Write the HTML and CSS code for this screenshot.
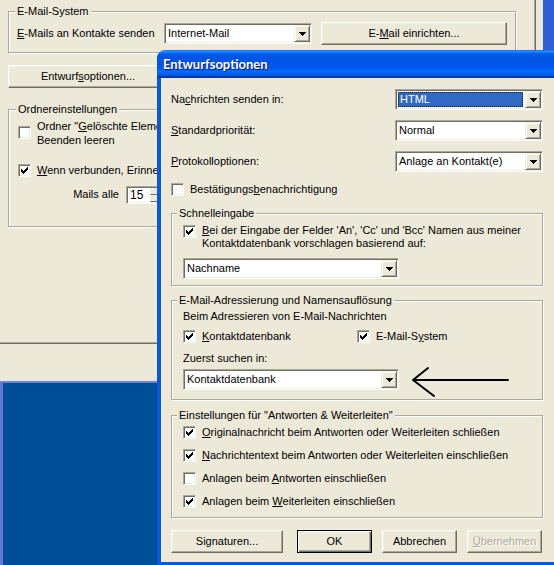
FILE: index.html
```html
<!DOCTYPE html>
<html lang="de">
<head>
    <meta charset="UTF-8">
    <title>Entwurfsoptionen</title>
    <link rel="stylesheet" href="styles.css">
</head>
<body>
<!-- window behind the dialog -->
<div class="win-back">
    <div class="page">
        <fieldset class="grp grp-mail">
            <legend>E-Mail-System</legend>
            <div class="mail-row">
                <span class="lbl-mail"><u>E</u>-Mails an Kontakte senden</span>
                <div class="combo w148">
                    <span class="val">Internet-Mail</span>
                    <span class="drop"><svg width="7" height="4" viewBox="0 0 7 4"><path d="M0 0h7v1h-1v1h-1v1h-1v1h-1v-1h-1v-1h-1v-1h-1z"/></svg></span>
                </div>
                <div class="btn btn-setup">E-<u>M</u>ail einrichten...</div>
            </div>
        </fieldset>

        <div class="btn btn-draft">Entwurf<u>s</u>optionen...</div>

        <fieldset class="grp grp-folder">
            <legend>Ordnereinstellungen</legend>
            <div class="chk chk-two">
                <span class="cb"></span>
                <span>Ordner "<u>G</u>elöschte Elemente" beim<br>Beenden leeren</span>
            </div>
            <div class="chk chk-remind">
                <span class="cb"><svg width="7" height="7" viewBox="0 0 7 7"><path d="M0 2h1v3h-1zM1 3h1v3h-1zM2 4h1v3h-1zM3 3h1v3h-1zM4 2h1v3h-1zM5 1h1v3h-1zM6 0h1v3h-1z"/></svg></span>
                <span><u>W</u>enn verbunden, Erinnerung an neue Nachrichten</span>
            </div>
            <div class="spin-row">
                <span class="lbl-spin">Mails alle</span>
                <div class="spin">
                    <span class="spin-val">15</span>
                    <span class="spin-btns"><span></span><span></span></span>
                </div>
            </div>
        </fieldset>
    </div>
</div>
<div class="win-low"></div>

<!-- dialog -->
<div class="dlg">
    <div class="dlg-title">Entwurfsoptionen</div>
    <div class="dlg-body">
        <div class="frow">
            <span class="lbl">Na<u>c</u>hrichten senden in:</span>
            <div class="combo w148">
                <span class="val sel">HTML</span>
                <span class="drop"><svg width="7" height="4" viewBox="0 0 7 4"><path d="M0 0h7v1h-1v1h-1v1h-1v1h-1v-1h-1v-1h-1v-1h-1z"/></svg></span>
            </div>
        </div>
        <div class="frow">
            <span class="lbl"><u>S</u>tandardpriorität:</span>
            <div class="combo w148">
                <span class="val">Normal</span>
                <span class="drop"><svg width="7" height="4" viewBox="0 0 7 4"><path d="M0 0h7v1h-1v1h-1v1h-1v1h-1v-1h-1v-1h-1v-1h-1z"/></svg></span>
            </div>
        </div>
        <div class="frow">
            <span class="lbl"><u>P</u>rotokolloptionen:</span>
            <div class="combo w148">
                <span class="val">Anlage an Kontakt(e)</span>
                <span class="drop"><svg width="7" height="4" viewBox="0 0 7 4"><path d="M0 0h7v1h-1v1h-1v1h-1v1h-1v-1h-1v-1h-1v-1h-1z"/></svg></span>
            </div>
        </div>
        <div class="chk chk-confirm">
            <span class="cb"></span>
            <span>Bestätigungs<u>b</u>enachrichtigung</span>
        </div>

        <fieldset class="grp grp-quick">
            <legend>Schnelleingabe</legend>
            <div class="chk chk-two">
                <span class="cb"><svg width="7" height="7" viewBox="0 0 7 7"><path d="M0 2h1v3h-1zM1 3h1v3h-1zM2 4h1v3h-1zM3 3h1v3h-1zM4 2h1v3h-1zM5 1h1v3h-1zM6 0h1v3h-1z"/></svg></span>
                <span><u>B</u>ei der Eingabe der Felder 'An', 'Cc' und 'Bcc' Namen aus meiner<br>Kontaktdatenbank vorschlagen basierend auf:</span>
            </div>
            <div class="combo w216 mt8">
                <span class="val">Nachname</span>
                <span class="drop"><svg width="7" height="4" viewBox="0 0 7 4"><path d="M0 0h7v1h-1v1h-1v1h-1v1h-1v-1h-1v-1h-1v-1h-1z"/></svg></span>
            </div>
        </fieldset>

        <fieldset class="grp grp-addr">
            <legend>E-Mail-Adressierung und Namensauflösung</legend>
            <div class="txt">Beim Adressieren von E-Mail-Nachrichten</div>
            <div class="pair">
                <div class="chk pair-left">
                    <span class="cb"><svg width="7" height="7" viewBox="0 0 7 7"><path d="M0 2h1v3h-1zM1 3h1v3h-1zM2 4h1v3h-1zM3 3h1v3h-1zM4 2h1v3h-1zM5 1h1v3h-1zM6 0h1v3h-1z"/></svg></span>
                    <span><u>K</u>ontaktdatenbank</span>
                </div>
                <div class="chk">
                    <span class="cb"><svg width="7" height="7" viewBox="0 0 7 7"><path d="M0 2h1v3h-1zM1 3h1v3h-1zM2 4h1v3h-1zM3 3h1v3h-1zM4 2h1v3h-1zM5 1h1v3h-1zM6 0h1v3h-1z"/></svg></span>
                    <span>E-Mail-S<u>y</u>stem</span>
                </div>
            </div>
            <div class="txt txt-first">Zuerst suchen in:</div>
            <div class="combo w216 mt4">
                <span class="val">Kontaktdatenbank</span>
                <span class="drop"><svg width="7" height="4" viewBox="0 0 7 4"><path d="M0 0h7v1h-1v1h-1v1h-1v1h-1v-1h-1v-1h-1v-1h-1z"/></svg></span>
            </div>
        </fieldset>

        <fieldset class="grp grp-reply">
            <legend>Einstellungen für "Antworten &amp; Weiterleiten"</legend>
            <div class="chk">
                <span class="cb"><svg width="7" height="7" viewBox="0 0 7 7"><path d="M0 2h1v3h-1zM1 3h1v3h-1zM2 4h1v3h-1zM3 3h1v3h-1zM4 2h1v3h-1zM5 1h1v3h-1zM6 0h1v3h-1z"/></svg></span>
                <span><u>O</u>riginalnachricht beim Antworten oder Weiterleiten schließen</span>
            </div>
            <div class="chk">
                <span class="cb"><svg width="7" height="7" viewBox="0 0 7 7"><path d="M0 2h1v3h-1zM1 3h1v3h-1zM2 4h1v3h-1zM3 3h1v3h-1zM4 2h1v3h-1zM5 1h1v3h-1zM6 0h1v3h-1z"/></svg></span>
                <span><u>N</u>achrichtentext beim Antworten oder Weiterleiten einschließen</span>
            </div>
            <div class="chk">
                <span class="cb"></span>
                <span>Anlagen beim <u>A</u>ntworten einschließen</span>
            </div>
            <div class="chk">
                <span class="cb"><svg width="7" height="7" viewBox="0 0 7 7"><path d="M0 2h1v3h-1zM1 3h1v3h-1zM2 4h1v3h-1zM3 3h1v3h-1zM4 2h1v3h-1zM5 1h1v3h-1zM6 0h1v3h-1z"/></svg></span>
                <span>Anlagen beim <u>W</u>eiterleiten einschließen</span>
            </div>
        </fieldset>

        <div class="buttons">
            <div class="btn btn-sig">Signaturen...</div>
            <div class="btn btn-ok">OK</div>
            <div class="btn">Abbrechen</div>
            <div class="btn disabled"><u>Ü</u>bernehmen</div>
        </div>
    </div>
</div>

<!-- hand drawn pointer -->
<svg class="arrow" width="554" height="565" viewBox="0 0 554 565">
    <path d="M413 380H508M413 380L428 368M413 380L434 396" fill="none" stroke="#000" stroke-width="2" stroke-linecap="round"/>
</svg>
</body>
</html>
```

FILE: styles.css
```css
* {
    box-sizing: border-box;
}

body {
    margin: 0;
    width: 554px;
    height: 565px;
    overflow: hidden;
    position: relative;
    background: #004e98;
    color: #000;
    font-family: "Liberation Sans", Arial, sans-serif;
    font-size: 11px;
    line-height: 13px;
}

u {
    text-decoration: underline;
    text-underline-offset: 1px;
}

svg {
    display: block;
    shape-rendering: crispEdges;
}

/* ---------- back window ---------- */

.win-back {
    position: absolute;
    left: 0;
    top: 0;
    width: 554px;
    height: 381px;
    background: #ece9d8;
    border-right: 11px solid #2f5fd6;
}

.page {
    width: 536px;
    height: 344px;
    border-right: 1px solid #716f64;
    border-bottom: 1px solid #716f64;
    box-shadow: inset -1px -1px 0 #aca899;
    padding: 5px 0 0 8px;
}

.win-low {
    position: absolute;
    left: 0;
    top: 381px;
    width: 160px;
    height: 184px;
    background: #004e98;
    border-top: 2px solid #7384d8;
    border-left: 3px solid #6577d4;
}

/* ---------- group boxes ---------- */

.grp {
    margin: 0;
    border: 1px solid #aca899;
    box-shadow: 1px 1px 0 #fff, inset 1px 1px 0 #fff;
    min-width: 0;
}

.grp legend {
    padding: 0 2px;
    margin-left: -2px;
    line-height: 13px;
    background: #ece9d8;
}

.grp-mail {
    width: 508px;
    padding: 4px 8px 7px 8px;
}

.mail-row {
    display: flex;
    align-items: center;
    height: 23px;
}

.lbl-mail {
    width: 147px;
}

.btn-setup {
    width: 186px;
    margin-left: 9px;
}

.btn-draft {
    width: 160px;
    margin-top: 12px;
}

.grp-folder {
    width: 508px;
    margin-top: 15px;
    padding: 3px 8px 22px 9px;
}

.chk {
    display: flex;
    align-items: center;
    gap: 6px;
    white-space: nowrap;
}

.chk-two {
    align-items: flex-start;
    line-height: 14px;
}

.chk-two .cb {
    margin-top: 7px;
}

.chk-remind {
    margin-top: 17px;
}

.spin-row {
    display: flex;
    align-items: center;
    margin-top: 8px;
    height: 19px;
}

.lbl-spin {
    width: 101px;
    text-align: right;
}

.spin {
    display: flex;
    width: 60px;
    height: 18px;
    margin-left: 7px;
    padding: 1px;
    background: #fff;
    border: 1px solid;
    border-color: #aca899 #fff #fff #aca899;
    box-shadow: inset 1px 1px 0 #716f64, inset -1px -1px 0 #f1efe2;
}

.spin-val {
    width: 22px;
    padding-left: 2px;
    line-height: 14px;
    font-size: 12px;
}

.spin-btns {
    display: flex;
    flex-direction: column;
    width: 15px;
}

.spin-btns span {
    flex: 1;
    background: #ece9d8;
    border: 1px solid;
    border-color: #f1efe2 #716f64 #716f64 #f1efe2;
}

/* ---------- controls ---------- */

.btn {
    display: flex;
    align-items: center;
    justify-content: center;
    height: 23px;
    background: #ece9d8;
    border: 1px solid;
    border-color: #fff #716f64 #716f64 #fff;
    box-shadow: inset -1px -1px 0 #aca899, inset 1px 1px 0 #f1efe2;
    white-space: nowrap;
}

.btn-ok {
    border-color: #000;
    box-shadow: inset 1px 1px 0 #fff, inset -1px -1px 0 #716f64, inset -2px -2px 0 #aca899;
}

.btn.disabled {
    color: #aca899;
    text-shadow: 1px 1px 0 #fff;
}

.combo {
    display: flex;
    height: 21px;
    padding: 1px;
    background: #fff;
    border: 1px solid;
    border-color: #aca899 #fff #fff #aca899;
    box-shadow: inset 1px 1px 0 #716f64, inset -1px -1px 0 #f1efe2;
    flex: none;
}

.w148 {
    width: 148px;
}

.w216 {
    width: 216px;
}

.val {
    flex: 1;
    padding-left: 2px;
    line-height: 17px;
    white-space: nowrap;
    overflow: hidden;
}

.val.sel {
    margin: 1px 2px 1px 1px;
    padding-left: 1px;
    line-height: 13px;
    background: #316ac5;
    color: #fff;
    border: 1px dotted #1a1a1a;
}

.drop {
    display: flex;
    align-items: center;
    justify-content: center;
    width: 16px;
    background: #ece9d8;
    border: 1px solid;
    border-color: #f1efe2 #716f64 #716f64 #f1efe2;
    box-shadow: inset 1px 1px 0 #fff, inset -1px -1px 0 #aca899;
}

.cb {
    display: flex;
    align-items: center;
    justify-content: center;
    flex: none;
    width: 13px;
    height: 13px;
    background: #fff;
    border: 1px solid;
    border-color: #aca899 #fff #fff #aca899;
    box-shadow: inset 1px 1px 0 #716f64, inset -1px -1px 0 #f1efe2;
}

/* ---------- dialog ---------- */

.dlg {
    position: absolute;
    left: 157px;
    top: 50px;
    width: 402px;
}

.dlg-title {
    height: 28px;
    display: flex;
    align-items: center;
    padding: 1px 0 0 6px;
    border-radius: 8px 8px 0 0;
    background: linear-gradient(#0058ee 0%, #3593ff 4%, #288eff 6%, #127dff 8%, #036ffc 10%, #0262ee 14%, #0057e5 20%, #0054e3 24%, #0055eb 56%, #005bf5 66%, #026afe 76%, #0062ef 86%, #0052d6 92%, #0040ab 94%, #003092 100%);
    color: #fff;
    font-family: Lato, "Liberation Sans", sans-serif;
    font-weight: bold;
    font-size: 13px;
    text-shadow: 1px 1px 0 #0a1883;
}

.dlg-body {
    height: 488px;
    background: #ece9d8;
    border: 4px solid #0a57e0;
    border-top: 0;
    padding: 11px 10px 0 10px;
}

.frow {
    display: flex;
    align-items: center;
    height: 21px;
    margin-bottom: 10px;
}

.frow .lbl {
    width: 224px;
}

.chk-confirm {
    margin-top: 11px;
}

.dlg .grp {
    width: 372px;
    padding: 4px 10px 9px 11px;
}

.dlg .grp legend {
    margin-left: -6px;
}

.grp-quick {
    margin-top: 11px;
    padding-bottom: 6px !important;
}

.grp-quick .chk-two {
    line-height: 13px;
}

.grp-quick .chk-two .cb {
    margin-top: 1px;
}

.mt8 {
    margin-top: 8px;
}

.mt4 {
    margin-top: 4px;
}

.grp-addr {
    margin-top: 8px;
    padding-top: 3px !important;
}

.pair {
    display: flex;
    margin-top: 7px;
}

.pair-left {
    width: 174px;
}

.txt-first {
    margin-top: 9px;
}

.grp-reply {
    margin-top: 9px;
}

.grp-reply .chk + .chk {
    margin-top: 10px;
}

.buttons {
    display: flex;
    gap: 10px;
    margin-top: 12px;
}

.buttons .btn {
    width: 75px;
}

.buttons .btn-sig {
    width: 112px;
    margin-right: 4px;
}

.arrow {
    position: absolute;
    left: 0;
    top: 0;
    pointer-events: none;
    shape-rendering: auto;
}
```
